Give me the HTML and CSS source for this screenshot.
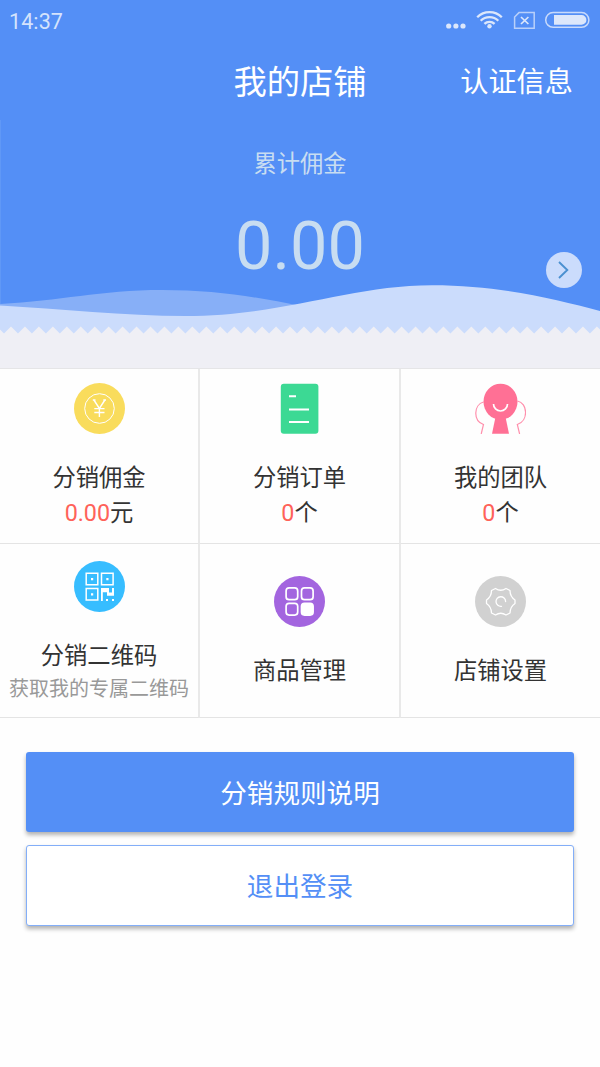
FILE: index.html
```html
<!DOCTYPE html>
<html lang="zh-CN">
<head>
<meta charset="utf-8">
<title>我的店铺</title>
<link rel="stylesheet" href="styles.css">
</head>
<body>
<header class="top">
  <div class="status">
    <span class="time">14:37</span>
    <svg class="status-icons" width="150" height="30" viewBox="0 0 150 30" fill="none">
      <g fill="#dce7fb"><circle cx="8.700" cy="17" r="2.600"/><circle cx="15.900" cy="17" r="2.600"/><circle cx="23" cy="17" r="2.600"/><circle cx="49.500" cy="17.300" r="2.200"/></g>
      <g stroke="#dce7fb" stroke-width="2.300"><path d="M37.200 8.300a17.400 17.400 0 0 1 24.600 0M40.700 11.700a12.400 12.400 0 0 1 17.600 0M44.400 14.900a7.200 7.200 0 0 1 10.200 0"/></g>
      <path d="M79 3.600h15.200v15.600H74.600V8z" stroke="#b9d0fa" stroke-width="1.500"/>
      <path d="m81 8 7.400 7M88.400 8 81 15" stroke="#dce7fb" stroke-width="1.700"/>
      <rect x="105.700" y="3.500" width="43.200" height="14.800" rx="7.400" stroke="#c8dafb" stroke-width="1.500"/>
      <path d="M114 6h27.500a4.900 4.900 0 0 1 0 9.800H114z" fill="#dce7fb"/>
    </svg>
  </div>
  <nav class="nav">
    <h1 class="title">我的店铺</h1>
    <a class="verify">认证信息</a>
  </nav>
</header>

<section class="hero">
  <svg class="waves" width="600" height="248" viewBox="0 120 600 248">
    <path d="M.5 120v185" stroke="#6098f6"/>
    <path d="M0 304C60 301 100 290 162 290C215 290 258 297 300 306V330H0z" fill="#87aff7"/>
    <path d="M0 305.500C60 309 125 316 185 316C285 316 350 285.300 432 285.300C500 285.300 555 299 600 311V336H0z" fill="#cbdcfc"/>
    <path d="M-9.920 333.500l6.975-7 6.975 7 6.975-7 6.975 7 6.975-7 6.975 7 6.975-7 6.975 7 6.975-7 6.975 7 6.975-7 6.975 7 6.975-7 6.975 7 6.975-7 6.975 7 6.975-7 6.975 7 6.975-7 6.975 7 6.975-7 6.975 7 6.975-7 6.975 7 6.975-7 6.975 7 6.975-7 6.975 7 6.975-7 6.975 7 6.975-7 6.975 7 6.975-7 6.975 7 6.975-7 6.975 7 6.975-7 6.975 7 6.975-7 6.975 7 6.975-7 6.975 7 6.975-7 6.975 7 6.975-7 6.975 7 6.975-7 6.975 7 6.975-7 6.975 7 6.975-7 6.975 7 6.975-7 6.975 7 6.975-7 6.975 7 6.975-7 6.975 7 6.975-7 6.975 7 6.975-7 6.975 7 6.975-7 6.975 7 6.975-7 6.975 7 6.975-7 6.975 7 6.975-7 6.975 7 6.975-7 6.975 7 6.975-7 6.975 7 6.975-7 6.975 7 6.975-7 6.975 7 6.975-7 6.975 7 6.975-7 6.975 7 6.975-7 6.975 7 6.975-7 6.975 7 6.975-7 6.975 7 6.975-7 6.975 7V368H-9.920z" fill="#efeff5"/>
  </svg>
  <div class="label">累计佣金</div>
  <div class="total">0.00</div>
  <a class="more">
    <svg width="36" height="36" viewBox="0 0 36 36" fill="none"><circle cx="18" cy="18" r="18" fill="#cbdcfc"/><path d="m13 10 8.300 8-8.300 8" stroke="#4a90d0" stroke-width="1.900"/></svg>
  </a>
</section>

<main>
  <section class="grid">
    <a class="cell">
      <svg class="icon" viewBox="0 0 51 51" fill="none"><circle cx="25.500" cy="25.500" r="25.500" fill="#f9dc5c"/><circle cx="25.500" cy="25.500" r="14.800" stroke="#fff"/><path d="m19.900 17 5.500 8.500 5.500-8.500M25.400 25.500V34M20.300 25.600h10.200M20.300 29.500h10.200M18.800 17h2.700M29.300 17h2.700" stroke="#fff" stroke-width="1.400"/></svg>
      <div class="name">分销佣金</div>
      <div class="value"><span class="num">0.00</span>元</div>
    </a>
    <a class="cell">
      <svg class="icon" viewBox="0 0 51 51"><rect x="6.800" y=".8" width="37.600" height="50" rx="3" fill="#3cd994"/><path d="M15 13.200h7M15 26.500h20M15 38.900h20" stroke="#fff" stroke-width="2"/></svg>
      <div class="name">分销订单</div>
      <div class="value"><span class="num">0</span>个</div>
    </a>
    <a class="cell">
      <svg class="icon" viewBox="0 0 51 51" fill="none"><path d="M8.500 19C-1 21.500-2.500 37.500 8.500 41.500L6.200 51M42.500 18C52.500 20 54 37.500 42.300 41.500L44.600 51" stroke="#ff8fac" stroke-width="1.200"/><ellipse cx="25.500" cy="18.700" rx="17" ry="18" fill="#ff7095"/><path d="M20.500 34h10l3.500 16.800H17z" fill="#ff7095"/><path d="M18.500 21a7 7 0 0 0 14 0" stroke="#fff" stroke-width="1.700"/></svg>
      <div class="name">我的团队</div>
      <div class="value"><span class="num">0</span>个</div>
    </a>
    <a class="cell">
      <svg class="icon" viewBox="0 0 51 51" fill="none"><circle cx="25.500" cy="25.500" r="25.500" fill="#37bdff"/><path d="M12.200 12.200h11.600v11.600H12.200zM27.500 12.200h11.600v11.600H27.500zM12.200 27.500h11.600v11.600H12.200z" stroke="#fff" stroke-width="1.500"/><path d="M17 17h2.200v2.200H17zM32.300 17h2.200v2.200h-2.200zM17 32.300h2.200v2.200H17zM27 27h8v4.500h3V27h2v7.800h-7v-3.600h-4.200V40H27zM32 38h2v2h-2zM38 38h2v2h-2z" fill="#fff"/></svg>
      <div class="name">分销二维码</div>
      <div class="hint">获取我的专属二维码</div>
    </a>
    <a class="cell cell-short">
      <svg class="icon" viewBox="0 0 51 51" fill="none"><circle cx="25.500" cy="25.500" r="25.500" fill="#a365df"/><g stroke="#fff" stroke-width="1.700"><rect x="12.100" y="11.900" width="11.600" height="11.800" rx="3"/><rect x="27.500" y="11.900" width="11.600" height="11.800" rx="3"/><rect x="12.100" y="27.300" width="11.600" height="11.800" rx="3"/><rect x="27.500" y="27.300" width="11.600" height="11.800" rx="3" fill="#fff"/></g></svg>
      <div class="name">商品管理</div>
    </a>
    <a class="cell cell-short">
      <svg class="icon" viewBox="0 0 51 51" fill="none"><circle cx="25.500" cy="25.500" r="25.500" fill="#d1d1d1"/><g stroke="#fff" stroke-width="1.300" stroke-linejoin="round" stroke-linecap="round"><path d="M20.500 12.500Q25.700 16 31 12.500L35 14.500Q35 20.500 40 24V27.500Q35 31 35 37L31 39Q25.700 35.500 20.500 39L16.500 37Q16.500 31 11.500 27.500V24Q16.500 20.500 16.500 14.500z"/><path d="M26.500 30.300A4.800 4.800 0 1 1 30.600 25.500"/></g></svg>
      <div class="name">店铺设置</div>
    </a>
  </section>
  <div class="actions">
    <button class="btn btn-primary">分销规则说明</button>
    <button class="btn btn-outline">退出登录</button>
  </div>
</main>
</body>
</html>
```

FILE: styles.css
```css
* { box-sizing: border-box; }
body {
  margin: 0;
  min-height: 1067px;
  background: #fefefe;
  color: #333;
  font-family: Roboto, "Noto Sans CJK SC", sans-serif;
}
.top { height: 120px; background: #548ff6; color: #fff; }
.status {
  display: flex;
  justify-content: space-between;
  height: 42px;
  padding: 9px 10px 0 9px;
}
.time { font-size: 21.500px; line-height: 26px; color: #d5e3fc; letter-spacing: .1px; }
.nav {
  display: grid;
  grid-template-columns: 1fr auto 1fr;
  align-items: center;
  height: 78px;
  padding: 2px 27px 0;
}
.title { grid-column: 2; margin: 0; font-size: 33.300px; font-weight: 400; line-height: 78px; }
.verify { justify-self: end; font-size: 28.200px; line-height: 78px; }
.hero {
  position: relative;
  height: 248px;
  padding-top: 27px;
  background: #548ff6;
  color: #c8ddf1;
  text-align: center;
}
.waves { position: absolute; left: 0; top: 0; }
.label { position: relative; font-size: 23.300px; line-height: 34px; }
.total { position: relative; margin-top: 25px; font-size: 66.600px; line-height: 80px; }
.more { position: absolute; right: 18px; top: 132px; width: 36px; height: 36px; }
.more svg { display: block; }
.grid {
  display: grid;
  grid-template-columns: 200px 201px 199px;
  grid-template-rows: 175px 174px;
  border-top: 1px solid #e5e5e7;
}
.cell {
  display: flex;
  flex-direction: column;
  align-items: center;
  padding-top: 14px;
  border-right: 2px solid #e9e9e9;
  border-bottom: 1px solid #e4e4e4;
  white-space: nowrap;
}
.cell:nth-child(3n) { border-right: 0; }
.cell:nth-child(n+4) { padding-top: 17px; }
.cell.cell-short { padding-top: 32px; }
.icon { width: 51px; height: 51px; flex: none; }
.name { margin-top: 26px; font-size: 23.300px; line-height: 36px; }
.value { font-size: 23.300px; line-height: 35px; }
.num { color: #ff6259; }
.hint { font-size: 20px; line-height: 30px; color: #999; }
.actions { display: grid; gap: 13px; padding: 34px 26px 0; }
.btn {
  height: 80px;
  padding: 0 0 2px;
  border: 0;
  border-radius: 3px;
  font: inherit;
  font-size: 26.600px;
  box-shadow: 0 3px 4px rgba(0, 0, 0, .3);
}
.btn-primary { background: #548ff6; color: #fff; }
.btn-outline { height: 81px; background: #fff; color: #548ff6; border: 1px solid #83aef8; }
```
